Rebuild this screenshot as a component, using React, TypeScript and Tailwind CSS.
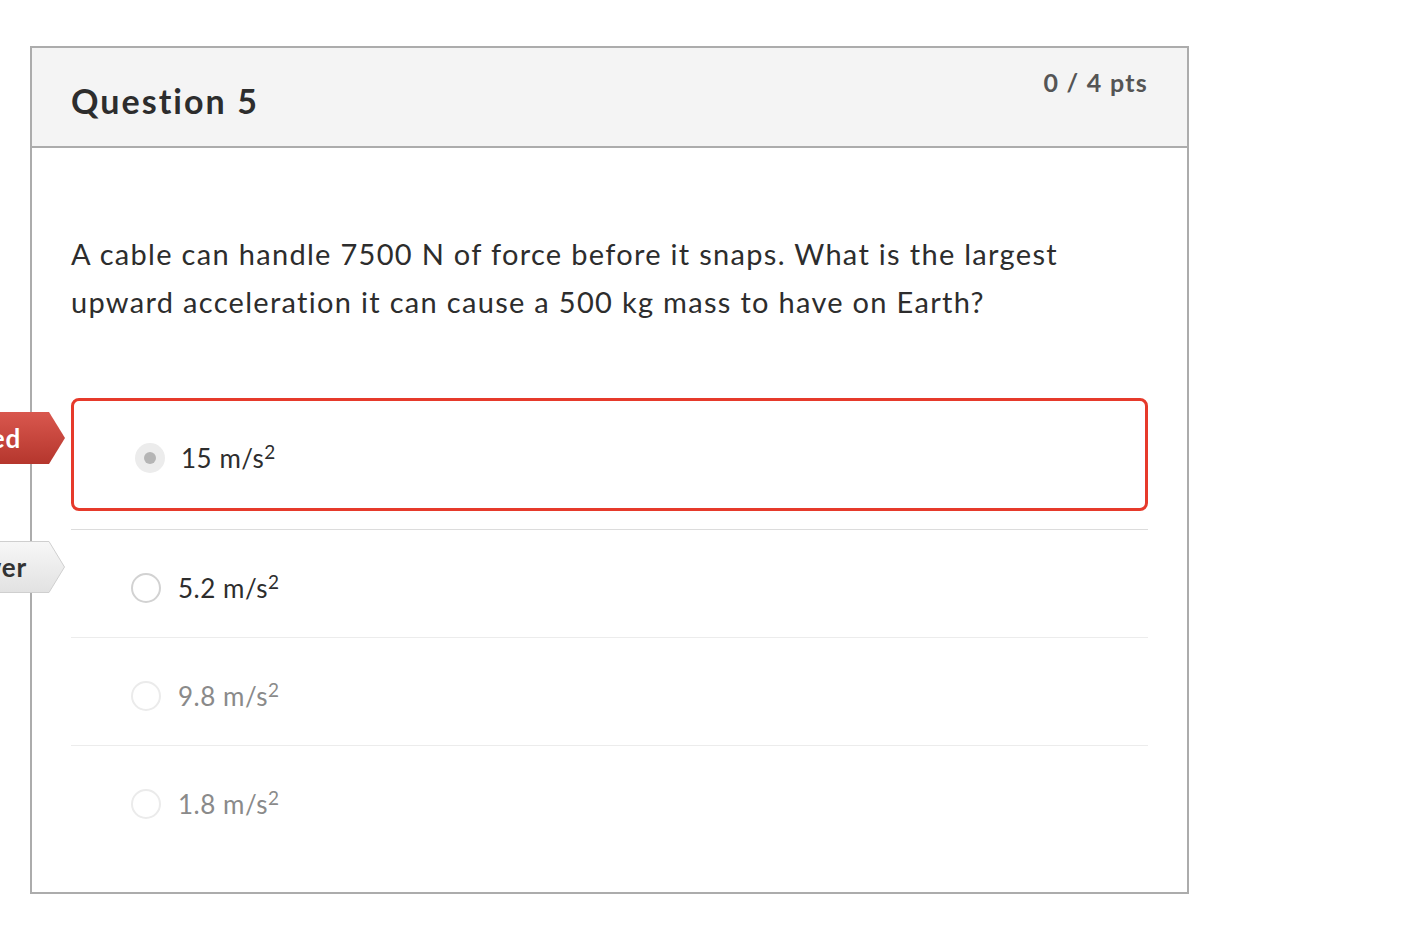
import React from 'react';

type Answer = {
  text: string;
  tone: 'dark' | 'muted';
  selected?: boolean;
  label?: 'answered' | 'correct';
};

const answers: Answer[] = [
  { text: '15 m/s', tone: 'dark', selected: true, label: 'answered' },
  { text: '5.2 m/s', tone: 'dark', label: 'correct' },
  { text: '9.8 m/s', tone: 'muted' },
  { text: '1.8 m/s', tone: 'muted' },
];

function Flag({ kind, top }: { kind: 'answered' | 'correct'; top: string }) {
  const red = kind === 'answered';
  return (
    <div className={`absolute right-[calc(100%+6px)] ${top} flex h-[52px] items-stretch`}>
      <div
        className={
          red
            ? 'flex items-center whitespace-nowrap bg-gradient-to-b from-[#d9574e] to-[#b5362d] pl-4 pr-[22px] text-[26px] font-bold tracking-[0.03em] text-white'
            : 'flex items-center whitespace-nowrap border-y border-[#cfcfcf] bg-gradient-to-b from-[#f7f7f7] to-[#e2e2e2] pl-4 pr-[16px] text-[26px] font-bold tracking-[0.03em] text-[#333]'
        }
      >
        {red ? 'You Answered' : 'Correct Answer'}
      </div>
      <svg width="22" height="52" viewBox="0 0 22 52" className="block">
        <defs>
          <linearGradient id={`g-${kind}`} x1="0" y1="0" x2="0" y2="1">
            <stop offset="0" stopColor={red ? '#d9574e' : '#f7f7f7'} />
            <stop offset="1" stopColor={red ? '#b5362d' : '#e2e2e2'} />
          </linearGradient>
        </defs>
        <polygon
          points={red ? '0,0 6,0 22,26 6,52 0,52' : '0,0.5 6,0.5 21.5,26 6,51.5 0,51.5'}
          fill={`url(#g-${kind})`}
          stroke={red ? 'none' : '#cfcfcf'}
          strokeWidth="1"
        />
        {!red && <rect x="0" y="1" width="2" height="50" fill="url(#g-correct)" />}
      </svg>
    </div>
  );
}

function Radio({ selected, tone }: { selected?: boolean; tone: 'dark' | 'muted' }) {
  if (selected) {
    return (
      <span className="flex h-[30px] w-[30px] shrink-0 items-center justify-center rounded-full bg-[#ececec]">
        <span className="h-[12px] w-[12px] rounded-full bg-[#b5b5b5]" />
      </span>
    );
  }
  return (
    <span
      className={
        tone === 'dark'
          ? 'h-[30px] w-[30px] shrink-0 rounded-full border-2 border-[#d2d2d2] bg-white'
          : 'h-[30px] w-[30px] shrink-0 rounded-full border-2 border-[#ebebeb] bg-white'
      }
    />
  );
}

function AnswerText({ text, tone }: { text: string; tone: 'dark' | 'muted' }) {
  return (
    <span
      className={
        tone === 'dark'
          ? 'text-[26px] leading-[30px] tracking-[0.02em] text-[#2d2d2d]'
          : 'text-[26px] leading-[30px] tracking-[0.02em] text-[#8a8a8a]'
      }
    >
      {text}
      <sup className="text-[19px]">2</sup>
    </span>
  );
}

export default function App() {
  return (
    <div
      className="min-h-screen bg-white pl-[30px] pt-[46px]"
      style={{ fontFamily: 'Lato, "Open Sans", sans-serif' }}
    >
      <div className="relative w-[1159px] border-2 border-[#acacac]">
        <div className="flex h-[100px] items-start justify-between border-b-2 border-[#acacac] bg-[#f4f4f4] px-[39px]">
          <h2 className="mt-[27px] text-[34px] font-bold tracking-[0.06em] text-[#2d2d2d]">Question 5</h2>
          <div className="mt-[16px] text-[25px] font-bold tracking-[0.05em] text-[#555]">0 / 4 pts</div>
        </div>

        <div className="px-[39px] pb-[39px] pt-[82px]">
          <p className="text-[29px] leading-[48px] tracking-[0.045em] text-[#2d2d2d]">
            A cable can handle 7500 N of force before it snaps. What is the largest upward acceleration it can
            cause a 500 kg mass to have on Earth?
          </p>

          <div className="mt-[72px]">
            {answers.map((a, i) =>
              a.selected ? (
                <div key={a.text} className="relative mb-[18px]">
                  {a.label && <Flag kind={a.label} top="top-[14px]" />}
                  <div className="flex h-[113px] items-start rounded-[8px] border-[3px] border-[#e63a2b] pl-[61px] pt-[42px]">
                    <div className="flex items-center gap-[16px]">
                      <Radio selected tone={a.tone} />
                      <AnswerText text={a.text} tone={a.tone} />
                    </div>
                  </div>
                </div>
              ) : (
                <div
                  key={a.text}
                  className={
                    i === 1
                      ? 'relative h-[108px] border-t border-[#dcdcdc] pl-[60px] pt-[43px]'
                      : 'relative h-[108px] border-t border-[#ececec] pl-[60px] pt-[43px]'
                  }
                >
                  {a.label && <Flag kind={a.label} top="top-[11px]" />}
                  <div className="flex items-center gap-[17px]">
                    <Radio tone={a.tone} />
                    <AnswerText text={a.text} tone={a.tone} />
                  </div>
                </div>
              )
            )}
          </div>
        </div>
      </div>
    </div>
  );
}
